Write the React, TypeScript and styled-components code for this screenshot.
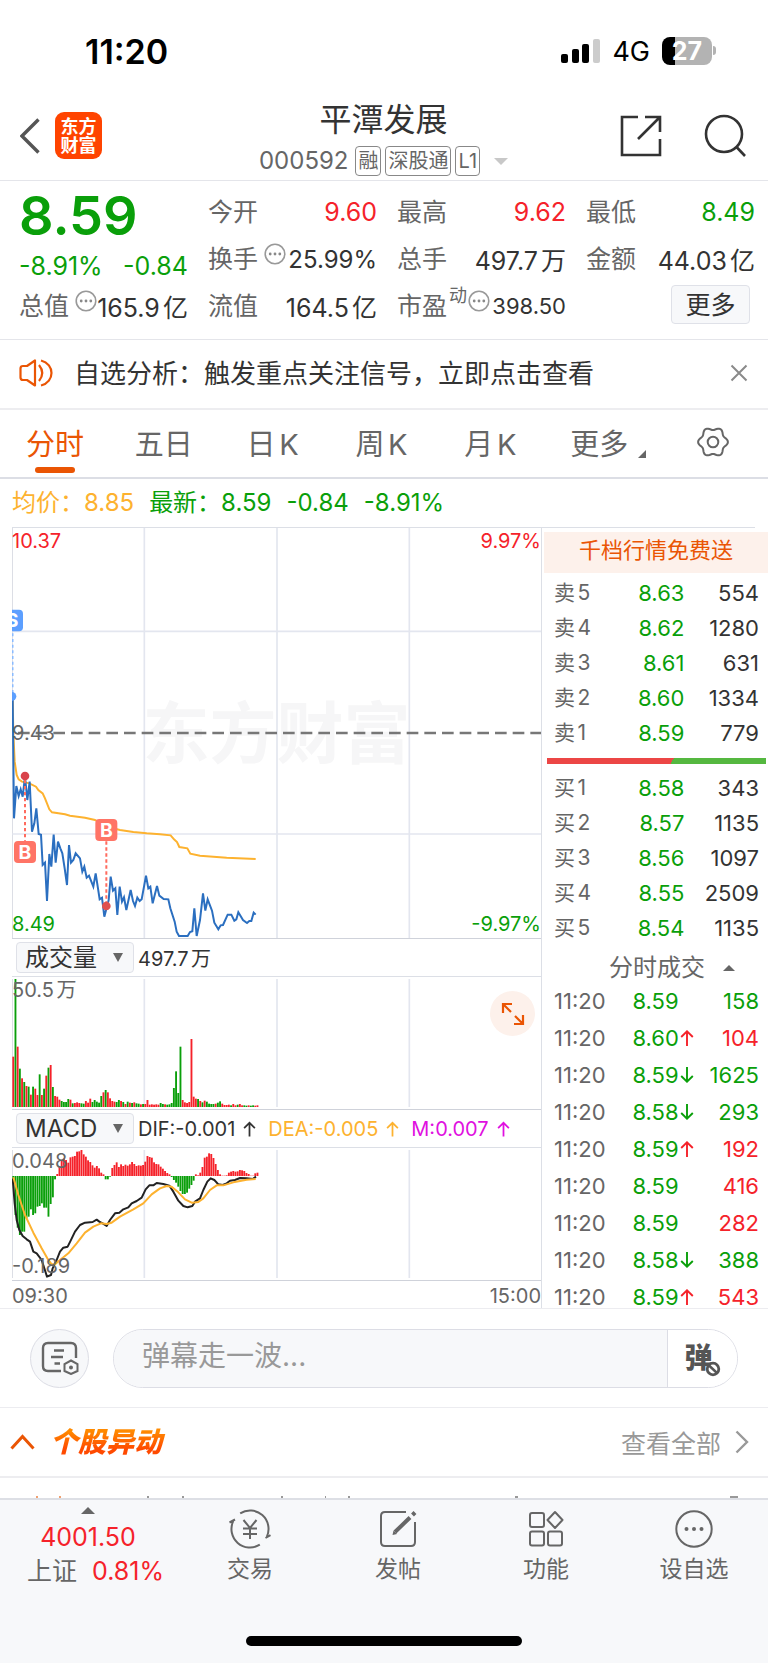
import React from "react";
import styled, { createGlobalStyle, css } from "styled-components";

const color = {
  up: "#f5222a",
  down: "#0a9f0a",
  text: "#333333",
  label: "#666666",
  muted: "#999999",
  line: "#e4e5ea",
  grid: "#e3e6ef",
  brand: "#ea5504",
  average: "#fdb22f",
  soft: "#f7f8fa",
};

type Tone = "up" | "down" | "text" | "label";

const GlobalStyle = createGlobalStyle`
  *, *::before, *::after { box-sizing: border-box; }
  body {
    margin: 0;
    background: #fff;
    color: ${color.text};
    font-family: Inter, "Noto Sans CJK SC", sans-serif;
    text-autospace: normal;
  }
  button, input { font: inherit; color: inherit; margin: 0; padding: 0; border: 0; background: none; }
  button { cursor: pointer; }
  a { color: inherit; text-decoration: none; }
  h1, h2, h3, p, dl, dd, dt { margin: 0; font-weight: 400; }
  table { border-collapse: collapse; width: 100%; }
  th, td { padding: 0; font-weight: 400; }
  svg { display: block; }
`;

const Page = styled.div`
  width: 100%;
  overflow: hidden;
`;

/* ---------- status bar ---------- */

const StatusBar = styled.div`
  display: flex;
  align-items: center;
  justify-content: space-between;
  height: 102px;
  padding: 0 56px 0 85px;
  color: #000;
`;

const Clock = styled.time`
  font-size: 34px;
  font-weight: 600;
`;

const StatusIcons = styled.div`
  display: flex;
  align-items: center;
  gap: 12px;
  font-size: 27px;
`;

const Battery = styled.div`
  position: relative;
  width: 50px;
  height: 28px;
  border-radius: 8px;
  background: linear-gradient(90deg, #000 27%, #b3b3b3 27%);
  color: #fff;
  font-size: 25px;
  font-weight: 700;
  line-height: 28px;
  text-align: center;

  &::after {
    content: "";
    position: absolute;
    left: 51px;
    top: 9px;
    width: 3px;
    height: 9px;
    border-radius: 0 3px 3px 0;
    background: #b3b3b3;
  }
`;

/* ---------- header ---------- */

const Header = styled.header`
  display: grid;
  grid-template-columns: 1fr auto 1fr;
  height: 79px;
  padding: 0 21px 0 20px;
  border-bottom: 1px solid ${color.line};
`;

const HeaderSide = styled.div<{ $end?: boolean }>`
  display: flex;
  align-items: center;
  justify-content: ${(p) => (p.$end ? "flex-end" : "flex-start")};
  gap: ${(p) => (p.$end ? "40px" : "15px")};
  padding-bottom: 11px;
`;

const Logo = styled.a`
  display: grid;
  place-content: center;
  width: 47px;
  height: 47px;
  border-radius: 9px;
  background: #ff4400;
  color: #fff;
  font-size: 18px;
  font-weight: 700;
  line-height: 19px;
  text-align: center;
`;

const TitleBlock = styled.div`
  display: flex;
  flex-direction: column;
  align-items: center;
`;

const Title = styled.h1`
  font-size: 32px;
  line-height: 36px;
`;

const Subtitle = styled.div`
  display: flex;
  align-items: center;
  gap: 4px;
  margin-top: 8px;
  color: ${color.label};
  font-size: 24px;
  line-height: 30px;
`;

const Code = styled.span`
  margin-right: 3px;
`;

const Tag = styled.span`
  height: 30px;
  padding: 0 2px;
  border: 1px solid #888;
  border-radius: 4px;
  font-size: 20px;
  line-height: 29px;
`;

const Caret = styled.span<{ $dir: "up" | "down"; $size: number; $height?: number; $fill: string }>`
  width: 0;
  height: 0;
  border: ${(p) => p.$size}px solid transparent;
  ${(p) =>
    p.$dir === "up"
      ? css`
          border-top: 0;
          border-bottom: ${p.$height ?? p.$size}px solid ${p.$fill};
        `
      : css`
          border-bottom: 0;
          border-top: ${p.$height ?? p.$size}px solid ${p.$fill};
        `}
`;

const TitleCaret = styled(Caret)`
  margin-left: 10px;
`;

/* ---------- quote panel ---------- */

const Quote = styled.section`
  display: grid;
  grid-template-columns: repeat(4, minmax(0, 1fr));
  column-gap: 20px;
  padding: 8px 13px 9px 19px;
  border-bottom: 1px solid ${color.line};
`;

const QuoteColumn = styled.dl`
  display: flex;
  flex-direction: column;
`;

const Stat = styled.div`
  display: flex;
  align-items: center;
  justify-content: space-between;
  height: 47px;
  padding-bottom: 1px;
  white-space: nowrap;
`;

const StatLabel = styled.dt`
  display: flex;
  align-items: center;
  padding-bottom: 4px;
  color: ${color.label};
  font-size: 25px;
`;

const StatValue = styled.dd<{ $tone?: Tone; $size?: number }>`
  color: ${(p) => color[p.$tone ?? "text"]};
  font-size: ${(p) => p.$size ?? 25}px;
`;

const LastPrice = styled.div`
  height: 58px;
  color: ${color.down};
  font-size: 54px;
  font-weight: 600;
  line-height: 54px;
`;

const Change = styled.div`
  display: flex;
  align-items: center;
  justify-content: space-between;
  height: 36px;
  padding-top: 2px;
  color: ${color.down};
  font-size: 25px;
`;

const Superscript = styled.sup`
  align-self: flex-start;
  margin-left: 2px;
  font-size: 18px;
  line-height: 20px;
`;

const InfoButton = styled.button<{ $gap?: boolean }>`
  margin: 0 ${(p) => (p.$gap ? -8 : 0)}px 6px ${(p) => (p.$gap ? 6 : 1)}px;
`;

const MoreRow = styled.div`
  display: flex;
  justify-content: flex-end;
  height: 47px;
  padding: 2px 5px 0 0;
`;

const MoreButton = styled.button`
  width: 79px;
  height: 39px;
  border: 1px solid #dfe1e8;
  border-radius: 4px;
  background: ${color.soft};
  font-size: 25px;
  line-height: 36px;
`;

/* ---------- notice ---------- */

const Notice = styled.section`
  display: flex;
  align-items: center;
  gap: 21px;
  height: 70px;
  padding: 0 20px 2px 19px;
  border-bottom: 2px solid #ededf0;
`;

const NoticeText = styled.a`
  flex: 1;
  padding-bottom: 3px;
  font-size: 26px;
  white-space: nowrap;
`;

/* ---------- tabs ---------- */

const Tabs = styled.nav`
  display: flex;
  align-items: stretch;
  justify-content: space-between;
  height: 69px;
  padding: 0 39px 0 26px;
  border-bottom: 2px solid #dcdee5;
`;

const Tab = styled.button<{ $active?: boolean; $wide?: boolean }>`
  position: relative;
  display: flex;
  align-items: center;
  padding: 0 ${(p) => (p.$wide ? 3 : 0)}px 4px;
  color: ${(p) => (p.$active ? color.brand : color.label)};
  font-size: 29px;

  ${(p) =>
    p.$active &&
    css`
      &::after {
        content: "";
        position: absolute;
        left: 9px;
        right: 9px;
        bottom: 4px;
        height: 6px;
        border-radius: 3px;
        background: ${color.brand};
      }
    `}
`;

const CornerMark = styled.span`
  margin: 24px 0 0 10px;
  border-left: 8px solid transparent;
  border-bottom: 8px solid ${color.label};
`;

/* ---------- chart area ---------- */

const Legend = styled.div`
  display: flex;
  align-items: center;
  gap: 15px;
  height: 49px;
  margin: 0 13px 0 12px;
  border-bottom: 1px solid #dcdfe6;
  color: ${color.down};
  font-size: 24px;
  line-height: 36px;
`;

const Average = styled.span`
  color: ${color.average};
`;

const Market = styled.div`
  display: grid;
  grid-template-columns: minmax(0, 530fr) minmax(0, 226fr);
  padding-left: 12px;
  border-bottom: 1px solid #ececf0;
`;

const ChartColumn = styled.div`
  border-right: 1px solid #dcdfe6;
`;

const Pane = styled.div`
  position: relative;
  border-bottom: 1px solid #cfd2da;
`;

const ChartLayer = styled.div`
  position: relative;

  > svg {
    width: 100%;
    height: auto;
  }
`;

const AxisLabel = styled.span<{ $edge: "top" | "middle" | "bottom"; $right?: boolean; $tone: Tone }>`
  position: absolute;
  ${(p) => (p.$right ? "right: 0;" : "left: 0;")}
  ${(p) => p.$edge === "top" && "top: 1px;"}
  ${(p) => p.$edge === "middle" && "top: calc(50% - 12px);"}
  ${(p) => p.$edge === "bottom" && "bottom: 2px;"}
  color: ${(p) => color[p.$tone]};
  font-size: 20px;
  line-height: 24px;
`;

const Watermark = styled.span`
  position: absolute;
  inset: 0;
  display: grid;
  place-items: center;
  padding-bottom: 9px;
  color: #f6f6f7;
  font-size: 67px;
  font-weight: 700;
`;

const IndicatorBar = styled.div`
  display: flex;
  align-items: center;
  gap: 4px;
  height: 38px;
  padding-left: 4px;
  border-bottom: 1px solid #dcdfe6;
  font-size: 20px;
  white-space: nowrap;
`;

const IndicatorButton = styled.button`
  display: flex;
  align-items: center;
  justify-content: space-between;
  width: 118px;
  height: 31px;
  padding: 0 10px 0 8px;
  border: 1px solid #dfe1e8;
  border-radius: 4px;
  background: ${color.soft};
  font-size: 24px;
  line-height: 28px;
`;

const Reading = styled.span<{ $fill: string }>`
  display: flex;
  align-items: center;
  gap: 8px;
  margin-right: 8px;
  color: ${(p) => p.$fill};
`;

const ExpandButton = styled.button`
  position: absolute;
  right: 6px;
  top: 14px;
  display: grid;
  place-items: center;
  width: 45px;
  height: 45px;
  border-radius: 50%;
  background: #fdf1eb;
`;

const TimeAxis = styled.div`
  display: flex;
  align-items: center;
  justify-content: space-between;
  height: 27px;
  padding-top: 3px;
  color: ${color.label};
  font-size: 20px;
`;

/* ---------- order book ---------- */

const BookColumn = styled.div`
  display: flex;
  flex-direction: column;
  padding-top: 4px;
`;

const Promo = styled.a`
  height: 41px;
  margin: 0 0 2px 2px;
  background: #fdf1eb;
  color: ${color.brand};
  font-size: 22px;
  line-height: 37px;
  text-align: center;
`;

const Book = styled.table`
  font-size: 22px;
`;

const Level = styled.tr`
  height: 35px;
  line-height: 30px;
`;

const LevelName = styled.th`
  width: 34%;
  padding-left: 12px;
  color: ${color.label};
  font-size: 21px;
  text-align: left;
`;

const LevelPrice = styled.td`
  color: ${color.down};
  text-align: right;
`;

const LevelVolume = styled.td`
  width: 37%;
  padding-right: 9px;
  text-align: right;
`;

const Ratio = styled.div`
  height: 6px;
  margin: 8px 2px 6px 5px;
  background: linear-gradient(120deg, #ec4645 57%, #55b840 57%);
`;

const TradesTitle = styled.button`
  display: flex;
  align-items: center;
  gap: 18px;
  height: 37px;
  padding: 8px 0 0 67px;
  color: ${color.label};
  font-size: 24px;
  line-height: 28px;
`;

const Trades = styled.div`
  flex: 1 1 0;
  min-height: 0;
  overflow: hidden;
  font-size: 22px;
`;

const Trade = styled.tr`
  height: 37px;
  line-height: 30px;
`;

const TradeTime = styled.td`
  width: 40%;
  padding-left: 12px;
  color: ${color.label};
`;

const TradePrice = styled.td`
  color: ${color.down};
`;

const PriceCell = styled.span`
  display: flex;
  align-items: center;
  gap: 1px;
`;

const Move = styled.span<{ $tone: Tone }>`
  color: ${(p) => color[p.$tone]};
`;

const TradeVolume = styled.td<{ $tone: Tone }>`
  padding-right: 9px;
  color: ${(p) => color[p.$tone]};
  text-align: right;
`;

/* ---------- comment bar ---------- */

const CommentBar = styled.form`
  display: flex;
  align-items: center;
  gap: 24px;
  height: 99px;
  padding: 0 30px;
  border-bottom: 1px solid #ececf0;
`;

const RoundButton = styled.button`
  display: grid;
  place-items: center;
  flex: none;
  width: 59px;
  height: 59px;
  border: 1px solid #dcdde5;
  border-radius: 50%;
  background: ${color.soft};
`;

const CommentField = styled.div`
  display: flex;
  flex: 1;
  height: 59px;
  border: 1px solid #dcdde5;
  border-radius: 30px;
  overflow: hidden;
`;

const CommentInput = styled.input`
  flex: 1;
  min-width: 0;
  padding: 0 0 4px 28px;
  background: ${color.soft};
  font-size: 28px;
  outline: 0;

  &::placeholder {
    color: ${color.muted};
    opacity: 1;
  }
`;

const BarrageToggle = styled.button`
  position: relative;
  width: 70px;
  padding: 0 8px 4px 0;
  border-left: 1px solid #dcdde5;
  background: #fff;
  color: #555;
  font-size: 28px;
  font-weight: 900;

  > svg {
    position: absolute;
    left: 37px;
    top: 31px;
  }
`;

/* ---------- stock alerts ---------- */

const Alerts = styled.section`
  display: flex;
  align-items: center;
  justify-content: space-between;
  height: 70px;
  padding: 0 19px 0 10px;
  border-bottom: 2px solid #ededf0;
`;

const AlertsToggle = styled.button`
  display: flex;
  align-items: center;
  gap: 15px;
`;

const AlertsTitle = styled.h2`
  padding-right: 4px;
  background: linear-gradient(180deg, #ff8a00 20%, #ff4a00 70%);
  background-clip: text;
  -webkit-background-clip: text;
  color: transparent;
  font-size: 28px;
  font-style: italic;
  font-weight: 900;
  line-height: 36px;
`;

const ViewAll = styled.a`
  display: flex;
  align-items: center;
  gap: 14px;
  color: ${color.muted};
  font-size: 25px;
`;

const AlertsPreview = styled.div`
  display: flex;
  align-items: flex-end;
  height: 20px;

  > svg {
    width: 100%;
  }
`;

/* ---------- bottom bar ---------- */

const BottomBar = styled.footer`
  height: 166px;
  border-top: 2px solid #dddfe5;
  background: ${color.soft};
`;

const BottomNav = styled.nav`
  display: grid;
  grid-template-columns: 176fr 148fr 148fr 148fr 148fr;
  height: 136px;
  color: ${color.label};
`;

const IndexTicker = styled.a`
  display: flex;
  flex-direction: column;
  align-items: center;
  padding-top: 7px;
  font-size: 25px;
  line-height: 34px;
`;

const TickerValue = styled.span`
  margin-top: 6px;
  color: ${color.up};
`;

const TickerRow = styled.span`
  display: flex;
  gap: 15px;
  padding-left: 15px;
`;

const TickerChange = styled.span`
  color: ${color.up};
`;

const NavItem = styled.a`
  display: flex;
  flex-direction: column;
  align-items: center;
  gap: 5px;
  padding-top: 9px;
  font-size: 23px;
  line-height: 30px;
`;

const HomeIndicator = styled.div`
  width: 36%;
  height: 10px;
  margin: 0 auto;
  border-radius: 5px;
  background: #000;
`;

/* ---------- data ---------- */

const asks = [
  ["卖5", "8.63", "554"],
  ["卖4", "8.62", "1280"],
  ["卖3", "8.61", "631"],
  ["卖2", "8.60", "1334"],
  ["卖1", "8.59", "779"],
];

const bids = [
  ["买1", "8.58", "343"],
  ["买2", "8.57", "1135"],
  ["买3", "8.56", "1097"],
  ["买4", "8.55", "2509"],
  ["买5", "8.54", "1135"],
];

type Direction = "up" | "down";

const trades: { price: string; move: Direction | null; volume: string; tone: Tone }[] = [
  { price: "8.59", move: null, volume: "158", tone: "down" },
  { price: "8.60", move: "up", volume: "104", tone: "up" },
  { price: "8.59", move: "down", volume: "1625", tone: "down" },
  { price: "8.58", move: "down", volume: "293", tone: "down" },
  { price: "8.59", move: "up", volume: "192", tone: "up" },
  { price: "8.59", move: null, volume: "416", tone: "up" },
  { price: "8.59", move: null, volume: "282", tone: "up" },
  { price: "8.58", move: "down", volume: "388", tone: "down" },
  { price: "8.59", move: "up", volume: "543", tone: "up" },
];

const priceLine =
  "38,535 42,895 49,798 56,828 62,808 68,830 75,770 82,840 89,785 96,935 103,910 109,865 116,942 123,944 128,1035 135,1028 141,1143 148,1002 154,1040 161,944 167,1028 174,965 181,985 187,1000 194,1045 201,1095 207,975 213,1028 220,1020 227,1000 240,1015 247,1055 253,1040 260,1073 267,1067 280,1100 287,1060 299,1138 306,1133 313,1190 326,1140 332,1070 339,1112 346,1105 352,1185 359,1100 366,1145 372,1132 379,1170 392,1110 399,1143 405,1158 412,1133 419,1143 425,1138 432,1100 438,1067 445,1105 451,1100 458,1150 471,1098 478,1127 491,1137 505,1138 511,1165 524,1205 530,1235 537,1248 563,1248 570,1236 577,1234 583,1165 590,1248 600,1200 609,1120 616,1172 623,1138 636,1172 643,1208 655,1228 662,1216 669,1215 683,1184 694,1184 703,1202 709,1198 715,1177 729,1200 741,1209 748,1203 754,1203 761,1178 767,1184";

const averageLine =
  "38,535 40,640 44,725 50,765 56,778 66,785 88,790 108,800 115,810 128,820 135,835 148,868 156,877 195,883 210,887 255,893 285,900 320,920 360,930 400,936 440,940 480,943 512,946 522,958 531,966 538,981 562,985 571,1001 600,1007 640,1010 680,1013 767,1017";

const difLine =
  "38,745 44,820 50,870 58,900 68,918 80,928 90,935 100,965 110,970 125,990 133,1015 141,1040 153,1035 158,1015 170,990 180,965 190,953 203,950 212,932 225,905 240,885 255,878 278,876 290,869 298,875 308,880 320,888 330,870 345,850 358,848 370,838 385,832 395,820 410,813 425,803 437,778 448,766 460,766 470,759 490,762 508,767 520,785 535,812 550,828 563,832 577,828 585,815 600,805 610,780 622,755 632,745 643,750 655,763 668,765 680,760 690,752 705,750 720,744 740,745 758,747 768,740";

const deaLine =
  "40,742 55,795 75,855 100,908 125,955 142,985 155,1003 165,1003 180,990 205,970 230,940 255,908 280,890 303,880 320,882 335,878 360,860 400,838 430,820 455,793 480,775 500,768 515,770 535,787 555,808 575,818 595,816 610,805 630,780 650,766 670,766 700,757 740,749 767,747";

/* one entry per minute: r/g for the side, then the bar height */
const volumeBars =
  "r151 g384 r181 g115 r86 g75 r63 g61 r37 g61 r55 r36 g98 r36 g55 r94 g118 r126 g60 r33 r31 r22 g18 g15 g15 g24 r22 g11 r12 r14 r12 g11 g10 r18 r13 r25 g15 g21 g16 g13 g33 r44 g51 r44 r26 r18 r16 g15 g21 r18 g15 r9 g16 r13 g12 r14 g11 g10 r8 g9 r9 r21 r7 r8 r7 r8 r7 g12 g9 r8 g7 g8 g12 g57 g107 g42 g181 r21 r14 r12 r15 r204 r31 r25 g24 r18 g14 r19 g16 g10 g9 g9 r10 g13 g17 r10 r6 r6 r7 g5 r9 r5 g7 r9 r5 g5 g4 r5 g4 g5 r4 r5".split(" ");

/* signed height of each histogram bar */
const macdBars = [
  -20, -117, -155, -177, -167, -167, -127, -122, -100, -117, -112, -92, -90, -82, -95, -95, -122, -84, -64, -10, 6, 28,
  48, 53, 48, 40, 56, 58, 60, 73, 74, 78, 65, 58, 47, 42, 32, 25, 30, 23, 10, 5, -10, -10, -2, 24, 33, 41, 27, 35, 30,
  34, 31, 35, 42, 36, 30, 32, 31, 33, 43, 60, 57, 55, 41, 36, 35, 28, 22, 15, 9, 5, -3, -12, -20, -32, -45, -54, -54,
  -50, -38, -27, -14, 5, 2, 10, 27, 55, 58, 68, 66, 54, 36, 18, 5, 1, 1, 2, 10, 13, 15, 13, 14, 18, 17, 15, 9, 6, 1, 1,
  8, 10,
];

const barX = (i: number) => 37 + i * 6.6;

/* six rounded lobes around the centre */
const gearOutline =
  Array.from({ length: 72 }, (_, i) => {
    const a = (i * Math.PI) / 36;
    const r = 13.4 + 1.5 * Math.cos(6 * a);
    return `${i ? "L" : "M"}${(16 + r * Math.cos(a)).toFixed(2)} ${(16 + r * Math.sin(a)).toFixed(2)}`;
  }).join("") + "Z";

/* ---------- icons ---------- */

const SignalIcon = () => (
  <svg width="39" height="24" viewBox="0 0 39 24" aria-hidden="true">
    <rect x="0" y="15" width="7" height="9" rx="2" />
    <rect x="11" y="10" width="7" height="14" rx="2" />
    <rect x="21" y="5" width="7" height="19" rx="2" />
    <rect x="32" y="0" width="7" height="24" rx="2" fill="#ccc" />
  </svg>
);

const InfoIcon = () => (
  <svg width="22" height="22" viewBox="0 0 22 22" fill="none" stroke="#999" strokeWidth="1.6" aria-hidden="true">
    <circle cx="11" cy="11" r="9.8" />
    <g fill="#888" stroke="none">
      <circle cx="6.2" cy="11" r="1.4" />
      <circle cx="11" cy="11" r="1.4" />
      <circle cx="15.8" cy="11" r="1.4" />
    </g>
  </svg>
);

const MoveArrow = ({ dir, width = 14 }: { dir: Direction; width?: number }) => (
  <svg width={width} height="16" viewBox="0 0 14 16" fill="none" stroke="currentColor" strokeWidth="1.9" aria-hidden="true">
    <path d={dir === "up" ? "M7 16V1.5M1.2 7L7 1.3L12.8 7" : "M7 0V14.5M1.2 9L7 14.7L12.8 9"} />
  </svg>
);

const GridLines = ({ top, height }: { top: number; height: number }) => (
  <g stroke={color.grid} strokeWidth="5">
    <path d={`M433 ${top}v${height}M831 ${top}v${height}M1228 ${top}v${height}`} />
    <path d={`M37 ${top}v${height}`} stroke="#d5d8e0" strokeWidth="3" />
  </g>
);

const PriceChart = () => (
  <svg viewBox="36 24 1587 1230" fill="none" role="img" aria-label="分时走势">
    <GridLines top={24} height={1230} />
    <path d="M37 334H1623M37 942H1623" stroke={color.grid} strokeWidth="5" />
    <path d="M37 639H1623" stroke="#777" strokeWidth="7" strokeDasharray="35 18" strokeDashoffset="-17" />
    <path d="M38 340V520" stroke="#8abbff" strokeWidth="5" strokeDasharray="9 8" />
    <polyline points={averageLine} stroke="#fdb22f" strokeWidth="6" />
    <polyline points={priceLine} stroke="#2b6fc0" strokeWidth="6" />
    <path d="M75 780V962M319 964V1150" stroke="#ff6b5e" strokeWidth="6" strokeDasharray="10 8" />
    <circle cx="75" cy="768" r="13" fill="#d9434a" />
    <circle cx="319" cy="1158" r="13" fill="#e0504f" />
    <circle cx="36" cy="529" r="13" fill="#5c9fff" />
    <rect x="4" y="269" width="65" height="65" rx="12" fill="#5c9fff" />
    <rect x="42" y="963" width="66" height="66" rx="12" fill="#ff7466" />
    <rect x="286" y="897" width="66" height="66" rx="12" fill="#ff7466" />
    <g fill="#fff" fontSize="58" fontWeight="700" textAnchor="middle">
      <text x="36" y="322">S</text>
      <text x="75" y="1017">B</text>
      <text x="319" y="951">B</text>
    </g>
  </svg>
);

const VolumeChart = () => (
  <svg viewBox="36 141 1587 396" role="img" aria-label="成交量">
    <GridLines top={147} height={384} />
    {volumeBars.map((bar, i) => {
      const h = Number(bar.slice(1));
      return (
        <rect key={i} x={barX(i)} y={531 - h} width="5.6" height={h} fill={bar[0] === "r" ? color.up : color.down} />
      );
    })}
  </svg>
);

const MacdChart = () => (
  <svg viewBox="36 654 1587 396" fill="none" role="img" aria-label="MACD">
    <GridLines top={660} height={384} />
    {macdBars.map((v, i) => (
      <rect
        key={i}
        x={barX(i)}
        y={v > 0 ? 738 - v : 738}
        width="5.6"
        height={Math.abs(v)}
        fill={v > 0 ? color.up : color.down}
      />
    ))}
    <polyline points={difLine} stroke="#222" strokeWidth="6" strokeLinejoin="round" />
    <polyline points={deaLine} stroke="#fdb22f" strokeWidth="6" strokeLinejoin="round" />
  </svg>
);

const OrderTable = ({ rows, label }: { rows: string[][]; label: string }) => (
  <Book aria-label={label}>
    <tbody>
      {rows.map(([name, price, volume]) => (
        <Level key={name}>
          <LevelName scope="row">{name}</LevelName>
          <LevelPrice>{price}</LevelPrice>
          <LevelVolume>{volume}</LevelVolume>
        </Level>
      ))}
    </tbody>
  </Book>
);

export default function App() {
  return (
    <Page>
      <GlobalStyle />

      <StatusBar>
        <Clock>11:20</Clock>
        <StatusIcons>
          <SignalIcon />
          <span>4G</span>
          <Battery>27</Battery>
        </StatusIcons>
      </StatusBar>

      <Header>
        <HeaderSide>
          <button aria-label="返回">
            <svg width="20" height="36" viewBox="0 0 20 36" fill="none" stroke="#555" strokeWidth="3.4">
              <path d="M18.5 1.5L2 18L18.5 34.5" />
            </svg>
          </button>
          <Logo href="#home">
            <span>东方</span>
            <span>财富</span>
          </Logo>
        </HeaderSide>
        <TitleBlock>
          <Title>平潭发展</Title>
          <Subtitle>
            <Code>000592</Code>
            <Tag>融</Tag>
            <Tag>深股通</Tag>
            <Tag>L1</Tag>
            <TitleCaret $dir="down" $size={7} $fill="#c8c8c8" />
          </Subtitle>
        </TitleBlock>
        <HeaderSide $end>
          <button aria-label="分享">
            <svg width="44" height="44" viewBox="0 0 44 44" fill="none" stroke="#333" strokeWidth="2.6">
              <path d="M19 3H3V41H41V25M26 3H41V18M41 3L19 25" />
            </svg>
          </button>
          <button aria-label="搜索">
            <svg width="44" height="44" viewBox="0 0 44 44" fill="none" stroke="#333" strokeWidth="2.6">
              <circle cx="21" cy="20" r="18" />
              <path d="M33.5 33L42 42" />
            </svg>
          </button>
        </HeaderSide>
      </Header>

      <Quote>
        <QuoteColumn as="div">
          <LastPrice>8.59</LastPrice>
          <Change>
            <span>-8.91%</span>
            <span>-0.84</span>
          </Change>
          <Stat as="dl">
            <StatLabel>
              总值
              <InfoButton $gap aria-label="总值说明">
                <InfoIcon />
              </InfoButton>
            </StatLabel>
            <StatValue>165.9亿</StatValue>
          </Stat>
        </QuoteColumn>
        <QuoteColumn>
          <Stat>
            <StatLabel>今开</StatLabel>
            <StatValue $tone="up">9.60</StatValue>
          </Stat>
          <Stat>
            <StatLabel>
              换手
              <InfoButton $gap aria-label="换手说明">
                <InfoIcon />
              </InfoButton>
            </StatLabel>
            <StatValue $size={24}>25.99%</StatValue>
          </Stat>
          <Stat>
            <StatLabel>流值</StatLabel>
            <StatValue>164.5亿</StatValue>
          </Stat>
        </QuoteColumn>
        <QuoteColumn>
          <Stat>
            <StatLabel>最高</StatLabel>
            <StatValue $tone="up">9.62</StatValue>
          </Stat>
          <Stat>
            <StatLabel>总手</StatLabel>
            <StatValue>497.7万</StatValue>
          </Stat>
          <Stat>
            <StatLabel>
              市盈<Superscript>动</Superscript>
              <InfoButton aria-label="市盈说明">
                <InfoIcon />
              </InfoButton>
            </StatLabel>
            <StatValue $size={22}>398.50</StatValue>
          </Stat>
        </QuoteColumn>
        <div>
          <QuoteColumn>
            <Stat>
              <StatLabel>最低</StatLabel>
              <StatValue $tone="down">8.49</StatValue>
            </Stat>
            <Stat>
              <StatLabel>金额</StatLabel>
              <StatValue>44.03亿</StatValue>
            </Stat>
          </QuoteColumn>
          <MoreRow>
            <MoreButton>更多</MoreButton>
          </MoreRow>
        </div>
      </Quote>

      <Notice>
        <svg width="34" height="30" viewBox="0 0 34 30" fill="none" stroke={color.brand} strokeWidth="2.2" aria-hidden="true">
          <path d="M16 2.5V27.5L8 22H4Q1.500 22 1.500 19.500V10.500Q1.500 8 4 8H8Z" strokeLinejoin="round" />
          <path d="M20 7Q26.500 15 20 23M22 2.500C36 6 36 24 22 27.500" />
        </svg>
        <NoticeText href="#analysis">自选分析：触发重点关注信号，立即点击查看</NoticeText>
        <button aria-label="关闭">
          <svg width="18" height="18" viewBox="0 0 18 18" stroke="#8a8a8a" strokeWidth="2">
            <path d="M1.5 1.5L16.5 16.5M16.5 1.5L1.5 16.5" />
          </svg>
        </button>
      </Notice>

      <Tabs>
        <Tab $active>分时</Tab>
        <Tab>五日</Tab>
        <Tab $wide>日K</Tab>
        <Tab $wide>周K</Tab>
        <Tab $wide>月K</Tab>
        <Tab>
          更多
          <CornerMark />
        </Tab>
        <Tab aria-label="设置">
          <svg width="32" height="32" viewBox="0 0 32 32" fill="none" stroke="#666" strokeWidth="2">
            <path d={gearOutline} />
            <circle cx="16" cy="16" r="5.3" />
          </svg>
        </Tab>
      </Tabs>

      <Legend>
        <Average>均价：8.85</Average>
        <span>最新：8.59</span>
        <span>-0.84</span>
        <span>-8.91%</span>
      </Legend>

      <Market>
        <ChartColumn>
          <Pane>
            <Watermark aria-hidden="true">东方财富</Watermark>
            <ChartLayer>
              <PriceChart />
            </ChartLayer>
            <AxisLabel $edge="top" $tone="up">10.37</AxisLabel>
            <AxisLabel $edge="top" $right $tone="up">9.97%</AxisLabel>
            <AxisLabel $edge="middle" $tone="label">9.43</AxisLabel>
            <AxisLabel $edge="bottom" $tone="down">8.49</AxisLabel>
            <AxisLabel $edge="bottom" $right $tone="down">-9.97%</AxisLabel>
          </Pane>
          <IndicatorBar>
            <IndicatorButton>
              成交量
              <Caret $dir="down" $size={5} $height={9} $fill="#666" />
            </IndicatorButton>
            <Reading $fill={color.text}>497.7万</Reading>
          </IndicatorBar>
          <Pane>
            <ChartLayer>
              <VolumeChart />
            </ChartLayer>
            <AxisLabel $edge="top" $tone="label">50.5万</AxisLabel>
            <ExpandButton aria-label="全屏">
              <svg width="24" height="24" viewBox="0 0 24 24" fill="none" stroke={color.brand} strokeWidth="2.2">
                <path d="M2 11V2H11M2 2L10 10M22 13V22H13M22 22L14 14" />
              </svg>
            </ExpandButton>
          </Pane>
          <IndicatorBar>
            <IndicatorButton>
              MACD
              <Caret $dir="down" $size={5} $height={9} $fill="#666" />
            </IndicatorButton>
            <Reading $fill={color.text}>
              DIF:-0.001 <MoveArrow dir="up" width={13} />
            </Reading>
            <Reading $fill={color.average}>
              DEA:-0.005 <MoveArrow dir="up" width={13} />
            </Reading>
            <Reading $fill="#e010e0">
              M:0.007 <MoveArrow dir="up" width={13} />
            </Reading>
          </IndicatorBar>
          <Pane>
            <ChartLayer>
              <MacdChart />
            </ChartLayer>
            <AxisLabel $edge="top" $tone="label">0.048</AxisLabel>
            <AxisLabel $edge="bottom" $tone="label">-0.189</AxisLabel>
          </Pane>
          <TimeAxis>
            <span>09:30</span>
            <span>15:00</span>
          </TimeAxis>
        </ChartColumn>

        <BookColumn>
          <Promo href="#level2">千档行情免费送</Promo>
          <OrderTable rows={asks} label="卖盘" />
          <Ratio />
          <OrderTable rows={bids} label="买盘" />
          <TradesTitle>
            分时成交
            <Caret $dir="up" $size={6} $fill="#666" />
          </TradesTitle>
          <Trades>
            <table aria-label="分时成交">
              <tbody>
                {trades.map((t, i) => (
                  <Trade key={i}>
                    <TradeTime>11:20</TradeTime>
                    <TradePrice>
                      <PriceCell>
                        {t.price}
                        {t.move && (
                          <Move $tone={t.move}>
                            <MoveArrow dir={t.move} />
                          </Move>
                        )}
                      </PriceCell>
                    </TradePrice>
                    <TradeVolume $tone={t.tone}>{t.volume}</TradeVolume>
                  </Trade>
                ))}
              </tbody>
            </table>
          </Trades>
        </BookColumn>
      </Market>

      <CommentBar onSubmit={(e) => e.preventDefault()}>
        <RoundButton type="button" aria-label="弹幕设置">
          <svg width="38" height="34" viewBox="0 0 38 34" fill="none" stroke="#666" strokeWidth="2.4">
            <path d="M35 17V7Q35 2 30 2H7Q2 2 2 7V25Q2 30 7 30H20" />
            <path d="M13 9.5H23M10 16H22M13.5 22.5H19" />
            <path d="M30 19.5L36.5 23V30L30 33L23.5 30V23Z" strokeWidth="2" />
            <circle cx="30" cy="26.5" r="2" fill="#666" stroke="none" />
          </svg>
        </RoundButton>
        <CommentField>
          <CommentInput aria-label="弹幕" placeholder="弹幕走一波..." />
          <BarrageToggle type="button">
            弹
            <svg width="16" height="16" viewBox="0 0 16 16" fill="#fff" stroke="#555" strokeWidth="2.8">
              <circle cx="8" cy="8" r="5.8" />
              <path d="M4 4.5L12 12" strokeWidth="2.4" />
            </svg>
          </BarrageToggle>
        </CommentField>
      </CommentBar>

      <Alerts>
        <AlertsToggle>
          <svg width="25" height="16" viewBox="0 0 25 16" fill="none" stroke={color.brand} strokeWidth="3">
            <path d="M1.5 14.5L12.5 2.5L23.5 14.5" />
          </svg>
          <AlertsTitle>个股异动</AlertsTitle>
        </AlertsToggle>
        <ViewAll href="#alerts">
          查看全部
          <svg width="14" height="24" viewBox="0 0 14 24" fill="none" stroke="#999" strokeWidth="2.4">
            <path d="M1.5 1.5L12 12L1.5 22.5" />
          </svg>
        </ViewAll>
      </Alerts>
      <AlertsPreview>
        <svg height="2" viewBox="0 0 768 2" preserveAspectRatio="none" aria-hidden="true">
          <path d="M36 1h2M59 1h2" stroke="#f0a070" strokeWidth="2" />
          <path d="M147 1h2M182 1h2M281 1h2M325 1h1M348 1h2M515 1h3M730 1h8" stroke="#999" strokeWidth="2" />
        </svg>
      </AlertsPreview>

      <BottomBar>
        <BottomNav>
          <IndexTicker href="#index">
            <Caret $dir="up" $size={7} $fill="#666" />
            <TickerValue>4001.50</TickerValue>
            <TickerRow>
              上证
              <TickerChange>0.81%</TickerChange>
            </TickerRow>
          </IndexTicker>
          <NavItem href="#trade">
            <svg width="44" height="40" viewBox="0 0 44 40" fill="none" stroke="#666" strokeWidth="2">
              <path d="M12.2 4.3A18.5 18.5 0 0 1 38.8 27.8M37.5 29L42.5 26.2" />
              <path d="M31.8 35.7A18.5 18.5 0 0 1 5.2 12.2M7 10.500L1.500 13.5" />
              <path d="M15.5 11L22 19L28.5 11M22 19V30M15 19.5H29M15 25H29" />
            </svg>
            交易
          </NavItem>
          <NavItem href="#post">
            <svg width="40" height="40" viewBox="0 0 40 40" fill="none" stroke="#666" strokeWidth="2">
              <path d="M28 3H7Q3 3 3 7V33Q3 37 7 37H33Q37 37 37 33V13" />
              <path d="M17 23L32 8.5M34.5 6L37 3.5" strokeWidth="4" />
              <path d="M14.5 26L15.500 21.500L19 25Z" fill="#666" stroke="none" />
            </svg>
            发帖
          </NavItem>
          <NavItem href="#features">
            <svg width="40" height="40" viewBox="0 0 40 40" fill="none" stroke="#666" strokeWidth="2">
              <rect x="4" y="4" width="14" height="14" rx="2" />
              <rect x="4" y="22.5" width="14" height="14" rx="2" />
              <rect x="22" y="22.5" width="14" height="14" rx="2" />
              <path d="M29 3L36.5 11L29 19L21.5 11Z" strokeLinejoin="round" />
            </svg>
            功能
          </NavItem>
          <NavItem href="#watchlist">
            <svg width="40" height="40" viewBox="0 0 40 40" fill="none" stroke="#666" strokeWidth="2">
              <circle cx="20" cy="20" r="17.7" />
              <g fill="#666" stroke="none">
                <circle cx="12.5" cy="20" r="2" />
                <circle cx="20" cy="20" r="2" />
                <circle cx="27.5" cy="20" r="2" />
              </g>
            </svg>
            设自选
          </NavItem>
        </BottomNav>
        <HomeIndicator />
      </BottomBar>
    </Page>
  );
}
